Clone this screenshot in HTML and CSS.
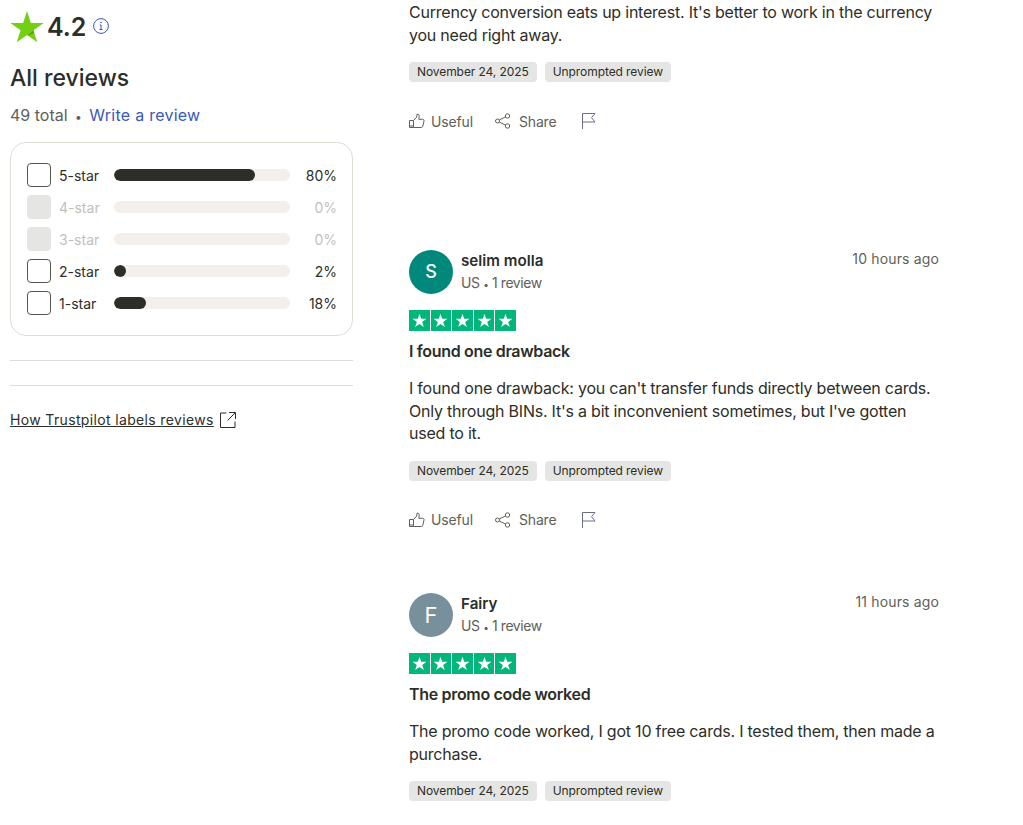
FILE: index.html
```html
<!DOCTYPE html>
<html lang="en">
<head>
  <meta charset="UTF-8">
  <meta name="viewport" content="width=device-width, initial-scale=1.0">
  <title>All reviews</title>
  <link rel="stylesheet" href="styles.css">
</head>
<body>
  <svg class="sprites" width="0" height="0" aria-hidden="true">
    <symbol id="tp-star" viewBox="0 0 24 24">
      <path d="M12 3.5l2.100 6.400h6.700l-5.400 3.900 2.100 6.400-5.500-3.900-5.500 3.900 2.100-6.400-5.400-3.900h6.700z" fill="#fff"/>
    </symbol>
    <symbol id="i-thumb" viewBox="0 0 16 16">
      <path d="M.5 7.500h4v7h-4zM4.500 7.500l3-3.200.7-3.300c1.300 0 2 .9 2 2.100L9.800 6.300h3.900c.9 0 1.500.8 1.300 1.700l-1.200 5.200c-.2.800-.8 1.300-1.600 1.300H4.500" fill="none" stroke="currentColor"/>
      <path d="M1 12h3v2.500H1z" fill="currentColor" opacity=".5"/>
    </symbol>
    <symbol id="i-share" viewBox="0 0 16 16">
      <g fill="none" stroke="currentColor">
        <circle cx="2.500" cy="8" r="2"/><circle cx="12.500" cy="3" r="2.200"/><circle cx="12.500" cy="13" r="2.200"/>
        <path d="M4.300 7l6.200-3.100M4.300 9l6.200 3.100"/>
      </g>
    </symbol>
    <symbol id="i-flag" viewBox="0 0 16 16">
      <path d="M1.500 16V.5h12.500l-3.500 4.200 3.500 4.300H1.500" fill="none" stroke="currentColor"/>
    </symbol>
  </svg>

  <div class="page">
    <aside class="sidebar">
      <div class="score">
        <svg class="score-star" width="34" height="32" viewBox="0 0 34 32">
          <path d="M17 0l3.900 11.900H33.700l-10.300 7.400 3.900 12-10.300-7.400-10.300 7.400 3.900-12L.3 11.900h12.800z" fill="#73cf11"/>
          <path d="M23.400 19.300l.9 2.900-7.300 2.700z" fill="#5aa80c"/>
        </svg>
        <span class="score-value">4.2</span>
        <svg class="score-info" width="16" height="16" viewBox="0 0 16 16">
          <circle cx="8" cy="8" r="7.400" fill="none" stroke="#3c57bc"/>
          <path d="M8 7v4.500M6.500 11.500h3M6.800 7H8" fill="none" stroke="#3c57bc"/>
          <circle cx="8" cy="4.500" r=".8" fill="#3c57bc"/>
        </svg>
      </div>
      <h2 class="sidebar-title">All reviews</h2>
      <p class="total">49 total <span class="dot">•</span> <a class="write-link" href="#">Write a review</a></p>

      <div class="filter-card">
        <div class="filter-row">
          <span class="checkbox"></span><span class="filter-label">5-star</span>
          <span class="bar"><span class="bar-fill" style="width: 80%"></span></span><span class="filter-pct">80%</span>
        </div>
        <div class="filter-row is-disabled">
          <span class="checkbox"></span><span class="filter-label">4-star</span>
          <span class="bar"></span><span class="filter-pct">0%</span>
        </div>
        <div class="filter-row is-disabled">
          <span class="checkbox"></span><span class="filter-label">3-star</span>
          <span class="bar"></span><span class="filter-pct">0%</span>
        </div>
        <div class="filter-row">
          <span class="checkbox"></span><span class="filter-label">2-star</span>
          <span class="bar"><span class="bar-fill" style="width: 7%"></span></span><span class="filter-pct">2%</span>
        </div>
        <div class="filter-row">
          <span class="checkbox"></span><span class="filter-label">1-star</span>
          <span class="bar"><span class="bar-fill" style="width: 18%"></span></span><span class="filter-pct">18%</span>
        </div>
      </div>

      <hr class="rule">
      <hr class="rule">

      <a class="labels-link" href="#">
        <span class="labels-text">How Trustpilot labels reviews</span>
        <svg width="16" height="16" viewBox="0 0 16 16">
          <path d="M6.500 1H.5v14.500h14.500V9.500M9 .5h6.500V7M15 1L7.500 8.500" fill="none" stroke="#2c2e27"/>
        </svg>
      </a>
    </aside>

    <main class="reviews">
      <article class="review review-cut">
        <p class="review-text">Currency conversion eats up interest. It's better to work in the currency you need right away.</p>
        <div class="tags">
          <span class="tag">November 24, 2025</span>
          <span class="tag">Unprompted review</span>
        </div>
        <div class="actions">
          <span class="action"><svg width="16" height="16"><use href="#i-thumb"/></svg>Useful</span>
          <span class="action action-share"><svg width="16" height="16"><use href="#i-share"/></svg>Share</span>
          <svg class="flag" width="16" height="16"><use href="#i-flag"/></svg>
        </div>
      </article>

      <article class="review">
        <header class="review-head">
          <span class="avatar avatar-green">S</span>
          <div class="author">
            <div class="author-name">selim molla</div>
            <div class="author-meta">US <span class="meta-dot">•</span> 1 review</div>
          </div>
          <time class="review-time">10 hours ago</time>
        </header>
        <div class="stars">
          <span class="star"><svg><use href="#tp-star"/></svg></span>
          <span class="star"><svg><use href="#tp-star"/></svg></span>
          <span class="star"><svg><use href="#tp-star"/></svg></span>
          <span class="star"><svg><use href="#tp-star"/></svg></span>
          <span class="star"><svg><use href="#tp-star"/></svg></span>
        </div>
        <h3 class="review-title">I found one drawback</h3>
        <p class="review-text">I found one drawback: you can't transfer funds directly between cards. Only through BINs. It's a bit inconvenient sometimes, but I've gotten used to it.</p>
        <div class="tags">
          <span class="tag">November 24, 2025</span>
          <span class="tag">Unprompted review</span>
        </div>
        <div class="actions">
          <span class="action"><svg width="16" height="16"><use href="#i-thumb"/></svg>Useful</span>
          <span class="action action-share"><svg width="16" height="16"><use href="#i-share"/></svg>Share</span>
          <svg class="flag" width="16" height="16"><use href="#i-flag"/></svg>
        </div>
      </article>

      <article class="review">
        <header class="review-head">
          <span class="avatar avatar-slate">F</span>
          <div class="author">
            <div class="author-name">Fairy</div>
            <div class="author-meta">US <span class="meta-dot">•</span> 1 review</div>
          </div>
          <time class="review-time">11 hours ago</time>
        </header>
        <div class="stars">
          <span class="star"><svg><use href="#tp-star"/></svg></span>
          <span class="star"><svg><use href="#tp-star"/></svg></span>
          <span class="star"><svg><use href="#tp-star"/></svg></span>
          <span class="star"><svg><use href="#tp-star"/></svg></span>
          <span class="star"><svg><use href="#tp-star"/></svg></span>
        </div>
        <h3 class="review-title">The promo code worked</h3>
        <p class="review-text">The promo code worked, I got 10 free cards. I tested them, then made a purchase.</p>
        <div class="tags">
          <span class="tag">November 24, 2025</span>
          <span class="tag">Unprompted review</span>
        </div>
      </article>
    </main>
  </div>
</body>
</html>
```

FILE: styles.css
```css
* {
  box-sizing: border-box;
  margin: 0;
  padding: 0;
}
html, body {
  height: 825px;
  overflow: hidden;
}
body {
  background: #fff;
  color: #2c2e27;
  font-family: Inter, "Noto Sans", sans-serif;
}
.sprites {
  display: block;
  height: 0;
}
a {
  color: inherit;
  text-decoration: none;
}
.page {
  display: grid;
  grid-template-columns: 343px 530px;
  column-gap: 56px;
  padding-left: 10px;
}

/* left column */
.sidebar {
  padding-top: 11px;
}
.score {
  display: flex;
  align-items: center;
  height: 32px;
}
.score-star {
  flex: none;
}
.score-value {
  margin-left: 3px;
  font-size: 25px;
  font-weight: 600;
}
.score-info {
  margin: 0 0 3px 7px;
}
.sidebar-title {
  margin-top: 17px;
  font-size: 23px;
  line-height: 36px;
  font-weight: 500;
}
.total {
  margin-top: 7px;
  font-size: 16px;
  line-height: 24px;
  color: #5f6058;
}
.dot {
  margin: 0 3px;
  font-size: 12px;
}
.write-link {
  color: #3c57bc;
  letter-spacing: .25px;
}
.filter-card {
  margin-top: 13px;
  padding: 20px 16px;
  border: 1px solid #e0dcd4;
  border-radius: 16px;
  display: flex;
  flex-direction: column;
  gap: 8px;
}
.filter-row {
  display: flex;
  align-items: center;
  height: 24px;
  font-size: 14px;
}
.checkbox {
  flex: none;
  width: 24px;
  height: 24px;
  border: 1px solid #54554e;
  border-radius: 4px;
}
.filter-label {
  flex: none;
  width: 55px;
  margin-left: 8px;
}
.bar {
  flex: none;
  width: 176px;
  height: 12px;
  background: #f3f0ea;
  border-radius: 6px;
  overflow: hidden;
}
.bar-fill {
  display: block;
  height: 100%;
  background: #2c2e27;
  border-radius: 6px;
}
.filter-pct {
  flex: 1;
  margin-right: -1px;
  text-align: right;
}
.is-disabled {
  color: #c0c0bc;
}
.is-disabled .checkbox {
  background: #e5e5e4;
  border-color: #e5e5e4;
}
.rule {
  margin-top: 24px;
  border: 0;
  border-top: 1px solid #dcdcd8;
}
.labels-link {
  display: flex;
  align-items: center;
  gap: 6px;
  margin-top: 24px;
  font-size: 14px;
  line-height: 20px;
  letter-spacing: .35px;
}
.labels-text {
  text-decoration: underline;
}

/* reviews */
.review {
  margin-bottom: 61px;
}
.review-cut {
  margin-top: 1.4px;
  margin-bottom: 116.600px;
}
.review-head {
  display: flex;
  align-items: flex-start;
  height: 44px;
}
.avatar {
  flex: none;
  width: 44px;
  height: 44px;
  border-radius: 50%;
  display: flex;
  align-items: center;
  justify-content: center;
  color: #fff;
  font-size: 18px;
  font-weight: 500;
}
.avatar-green {
  background: #00897b;
}
.avatar-slate {
  background: #78909c;
  font-size: 22px;
  font-weight: 400;
}
.author {
  flex: 1;
  margin-left: 8px;
}
.author-name {
  font-size: 15.200px;
  line-height: 22px;
  font-weight: 600;
}
.author-meta {
  font-size: 14px;
  line-height: 22px;
  color: #5f6058;
  letter-spacing: -.4px;
}
.meta-dot {
  font-size: 10px;
}
.review-time {
  font-size: 14px;
  line-height: 18px;
  color: #5f6058;
  letter-spacing: .15px;
}
.stars {
  display: flex;
  gap: 1px;
  margin-top: 16px;
}
.star {
  width: 20.600px;
  height: 21px;
  background: #00b67a;
  display: flex;
  align-items: center;
  justify-content: center;
}
.star svg {
  width: 19px;
  height: 19px;
}
.review-title {
  margin-top: 9.600px;
  font-size: 16px;
  line-height: 22px;
  font-weight: 600;
  letter-spacing: -.32px;
}
.review-text {
  font-size: 16px;
  line-height: 22.400px;
  letter-spacing: -.22px;
}
.review-title + .review-text {
  margin-top: 15px;
}
.tags {
  display: flex;
  gap: 8px;
  margin-top: 16px;
}
.tag {
  height: 20px;
  padding: 0 8px;
  border-radius: 4px;
  background: #e5e5e4;
  font-size: 12px;
  line-height: 20px;
  letter-spacing: -.08px;
}
.actions {
  display: flex;
  align-items: center;
  margin-top: 27px;
  height: 24px;
  color: #5f6058;
  font-size: 14px;
  letter-spacing: -.15px;
}
.action {
  display: flex;
  align-items: center;
  gap: 6px;
  margin-right: 22px;
}
.action-share {
  gap: 8px;
  margin-right: 23px;
}
.flag {
  margin-left: 1px;
  color: #6a6c8a;
}
```
